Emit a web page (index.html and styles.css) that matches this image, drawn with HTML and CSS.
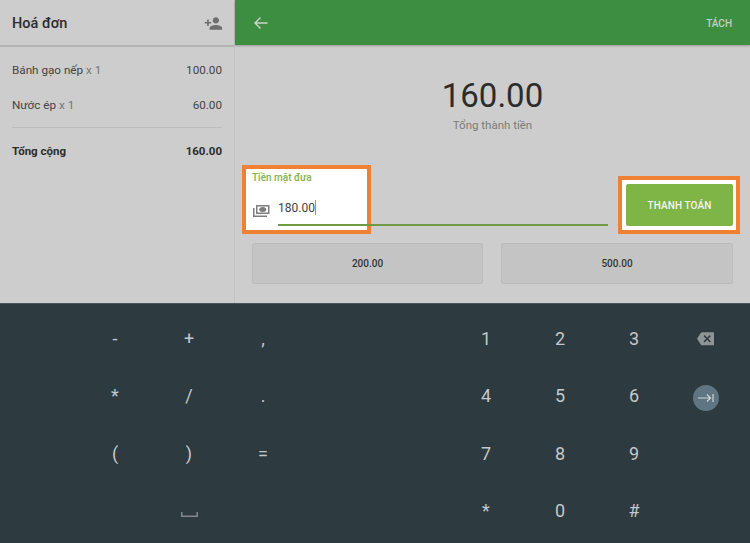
FILE: index.html
```html
<!DOCTYPE html>
<html lang="en">

<head>
    <title>Thanh toán</title>
    <meta charset="utf-8">
    <link rel="stylesheet" href="styles.css">
</head>

<body>
    <div class="top">
        <aside class="bill">
            <header class="bill-head">
                <h2>Hoá đơn</h2>
                <svg class="add-person" viewBox="0 0 24 24">
                    <path d="M15 12c2.21 0 4-1.79 4-4s-1.79-4-4-4-4 1.79-4 4 1.79 4 4 4zm-9-2V7H4v3H1v2h3v3h2v-3h3v-2H6zm9 4c-2.67 0-8 1.34-8 4v2h16v-2c0-2.66-5.33-4-8-4z" />
                </svg>
            </header>
            <div class="bill-body">
                <div class="line">
                    <span>Bánh gạo nếp <em>x 1</em></span>
                    <span>100.00</span>
                </div>
                <div class="line">
                    <span>Nước ép <em>x 1</em></span>
                    <span>60.00</span>
                </div>
                <div class="line total">
                    <span>Tổng cộng</span>
                    <span>160.00</span>
                </div>
            </div>
        </aside>

        <main class="pay">
            <header class="pay-head">
                <svg class="back" viewBox="0 0 16 16">
                    <path d="M14.500 8H2M7.500 2.500L2 8l5.500 5.500" />
                </svg>
                <a href="#">TÁCH</a>
            </header>

            <div class="amount">
                <p class="amount-value">160.00</p>
                <p class="amount-label">Tổng thành tiền</p>
            </div>

            <div class="cash-row">
                <div class="mark mark-field"></div>
                <div class="mark mark-button"></div>
                <div class="cash-field">
                    <label>Tiền mặt đưa</label>
                    <div class="cash-input">
                        <svg class="money" viewBox="0 0 18 14">
                            <path d="M4 1h13.500v9H4zM5.500 2.500v6h10.500v-6z" fill-rule="evenodd" />
                            <ellipse cx="10.700" cy="5.500" rx="3.500" ry="2.500" />
                            <path d="M1 4h1.500v7.500H15V13H1z" />
                        </svg>
                        <div class="cash-value">180.00<i class="caret"></i></div>
                    </div>
                </div>
                <button class="pay-btn">THANH TOÁN</button>
            </div>

            <div class="quick">
                <button>200.00</button>
                <button>500.00</button>
            </div>
        </main>
    </div>

    <section class="keyboard">
        <span>-</span><span>+</span><span>,</span><span></span><span></span>
        <span>1</span><span>2</span><span>3</span>
        <span class="key-icon">
            <svg class="backspace" viewBox="0 0 24 24">
                <path d="M22 3H7c-.69 0-1.23.35-1.59.88L0 12l5.41 8.11c.36.53.9.89 1.59.89h15c1.100 0 2-.9 2-2V5c0-1.100-.9-2-2-2zm-3 12.590L17.590 17 14 13.410 10.410 17 9 15.590 12.590 12 9 8.410 10.410 7 14 10.590 17.590 7 19 8.410 15.410 12 19 15.590z" />
            </svg>
        </span>

        <span>*</span><span>/</span><span>.</span><span></span><span></span>
        <span>4</span><span>5</span><span>6</span>
        <span class="key-icon">
            <i class="tab-key">
                <svg viewBox="0 0 16 12">
                    <path d="M0 6h12.500M9 2.500L12.500 6 9 9.500M15 2v8" />
                </svg>
            </i>
        </span>

        <span>(</span><span>)</span><span>=</span><span></span><span></span>
        <span>7</span><span>8</span><span>9</span><span></span>

        <span></span>
        <span class="key-icon">
            <svg class="space" viewBox="0 0 17 5">
                <path d="M.75 0v4.250h15.500V0" />
            </svg>
        </span>
        <span></span><span></span><span></span>
        <span>*</span><span>0</span><span>#</span><span></span>
    </section>
</body>

</html>
```

FILE: styles.css
```css
* {
    padding: 0;
    margin: 0;
    box-sizing: border-box;
    font-family: Roboto, "Liberation Sans", sans-serif;
}

body {
    width: 750px;
    height: 543px;
    overflow: hidden;
    background-color: #cdcdcd;
    color: #2c2c2c;
}

.top {
    display: flex;
    height: 303px;
}

/* left bill */
.bill {
    width: 235px;
    border-right: 1px solid #c2c2c2;
}

.bill-head {
    display: flex;
    justify-content: space-between;
    align-items: center;
    height: 47px;
    padding: 2px 11px 0 12px;
    border-bottom: 2px solid #b4b4b4;
}

.bill-head h2 {
    font-size: 14.500px;
    font-weight: 500;
}

.add-person {
    width: 19px;
    height: 19px;
    fill: #6e6e6e;
}

.bill-body {
    padding: 5px 12px 0;
}

.line {
    display: flex;
    justify-content: space-between;
    align-items: center;
    height: 35px;
    font-size: 11.700px;
    color: #444;
}

.line em {
    font-style: normal;
    color: #757575;
}

.total {
    height: 46px;
    margin-top: 5px;
    border-top: 1px solid #bdbdbd;
    font-weight: 700;
    font-size: 11.500px;
    color: #2c2c2c;
}

/* right side */
.pay {
    flex: 1;
}

.pay-head {
    display: flex;
    justify-content: space-between;
    align-items: center;
    height: 45px;
    padding: 1px 18px 0 18px;
    background-color: #3d8e41;
    box-shadow: 0 1px 2px rgba(0, 0, 0, 0.25);
}

.pay-head a {
    font-size: 10px;
    font-weight: 500;
    text-decoration: none;
    color: #c5cec5;
}

.back {
    width: 16px;
    height: 16px;
    fill: none;
    stroke: #c9d6c9;
    stroke-width: 1.400;
}

.amount {
    padding-top: 31px;
    text-align: center;
}

.amount-value {
    font-size: 33px;
    line-height: 40px;
}

.amount-label {
    margin-top: 1px;
    font-size: 11.500px;
    line-height: 16px;
    color: #7c7c7c;
}

.cash-row {
    position: relative;
    display: flex;
    justify-content: space-between;
    align-items: flex-end;
    height: 66px;
    margin-top: 27px;
    padding: 0 17px;
}

/* orange highlight boxes drawn over the screenshot */
.mark {
    position: absolute;
    bottom: -8px;
    background-color: #fff;
    border: 4px solid #f08132;
}

.mark-field {
    left: 7px;
    width: 129px;
    top: 5px;
}

.mark-button {
    right: 10px;
    width: 122px;
    top: 16px;
}

.cash-field {
    position: relative;
    width: 356px;
    height: 55px;
}

.cash-field label {
    display: block;
    font-size: 10px;
    font-weight: 500;
    line-height: 14px;
    color: #7fb04c;
}

.cash-input {
    display: flex;
    align-items: center;
    gap: 8px;
    margin-top: 11px;
}

.money {
    width: 18px;
    height: 14px;
    fill: #7d7d7d;
}

.cash-value {
    flex: 1;
    height: 30px;
    padding-top: 3px;
    font-size: 12px;
    line-height: 18px;
    border-bottom: 2px solid #6d9a42;
    color: #444;
}

.caret {
    display: inline-block;
    width: 1px;
    height: 15px;
    vertical-align: -3px;
    background-color: #7fb04c;
}

.pay-btn {
    position: relative;
    width: 107px;
    height: 42px;
    border: none;
    border-radius: 2px;
    font-size: 10px;
    font-weight: 500;
    letter-spacing: 0.1px;
    color: #f4f4f4;
    background-color: #7fb447;
}

.quick {
    display: flex;
    gap: 18px;
    margin-top: 17px;
    padding: 0 17px;
}

.quick button {
    flex: 1;
    height: 41px;
    border: 1px solid #bcbcbc;
    border-radius: 2px;
    font-size: 10px;
    font-weight: 500;
    color: #333;
    background-color: #c4c4c4;
}

.quick button:first-child {
    flex: none;
    width: 231px;
}

/* keyboard */
.keyboard {
    display: grid;
    grid-template-columns: repeat(4, 74px) 75px repeat(3, 74px) 69px;
    grid-template-rows: repeat(4, 57.500px);
    height: 240px;
    padding: 5.500px 0 0 78px;
    background-color: #2d3a40;
    border-top: 1px solid #4a555a;
}

.keyboard span {
    display: flex;
    justify-content: center;
    align-items: center;
    font-size: 18px;
    color: #c4c8ca;
}

.backspace {
    width: 17.500px;
    height: 17.500px;
    fill: #8f9497;
}

.tab-key {
    display: flex;
    justify-content: center;
    align-items: center;
    width: 26px;
    height: 26px;
    margin-top: 5px;
    border-radius: 50%;
    background-color: #5f7682;
}

.tab-key svg {
    width: 16px;
    height: 12px;
    fill: none;
    stroke: #d0d6d9;
    stroke-width: 1.200;
}

.space {
    width: 17px;
    height: 5px;
    margin-top: 7px;
    fill: none;
    stroke: #81898c;
    stroke-width: 1.500;
}
```
